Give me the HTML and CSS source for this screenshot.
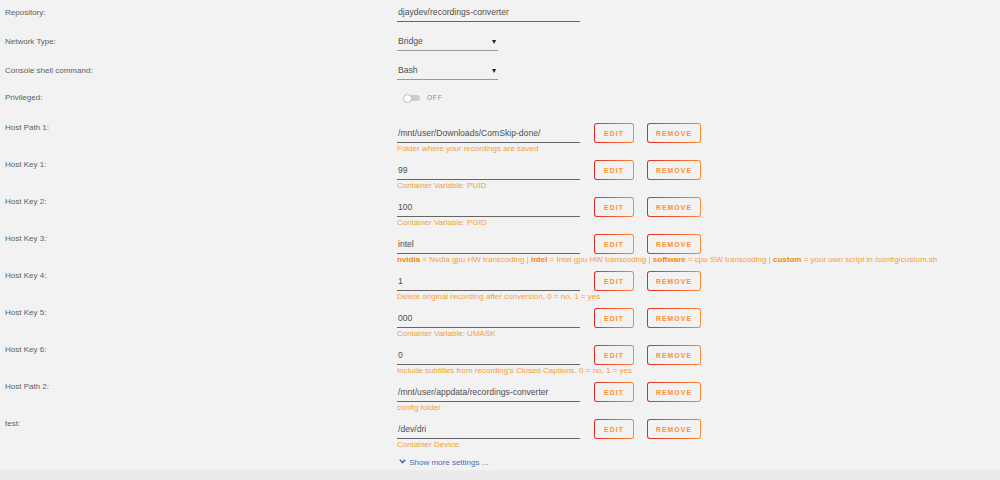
FILE: index.html
```html
<!DOCTYPE html>
<html lang="en">
<head>
    <meta charset="UTF-8">
    <title>Update Container</title>
    <link rel="stylesheet" href="styles.css">
</head>
<body>
    <div class="form">
        <div class="row simple">
            <div class="label">Repository:</div>
            <div class="field"><div class="input">djaydev/recordings-converter</div></div>
        </div>
        <div class="row simple">
            <div class="label">Network Type:</div>
            <div class="field"><div class="select">Bridge<span class="caret">&#9662;</span></div></div>
        </div>
        <div class="row simple">
            <div class="label">Console shell command:</div>
            <div class="field"><div class="select">Bash<span class="caret">&#9662;</span></div></div>
        </div>
        <div class="row toggle-row">
            <div class="label">Privileged:</div>
            <div class="field">
                <span class="switch"><span class="knob"></span></span>
                <span class="switch-text">OFF</span>
            </div>
        </div>

        <div class="row host">
            <div class="label">Host Path 1:</div>
            <div class="field">
                <div class="line">
                    <div class="input">/mnt/user/Downloads/ComSkip-done/</div>
                    <button class="btn edit">EDIT</button>
                    <button class="btn remove">REMOVE</button>
                </div>
                <div class="help">Folder where your recordings are saved</div>
            </div>
        </div>
        <div class="row host">
            <div class="label">Host Key 1:</div>
            <div class="field">
                <div class="line">
                    <div class="input">99</div>
                    <button class="btn edit">EDIT</button>
                    <button class="btn remove">REMOVE</button>
                </div>
                <div class="help">Container Variable: PUID</div>
            </div>
        </div>
        <div class="row host">
            <div class="label">Host Key 2:</div>
            <div class="field">
                <div class="line">
                    <div class="input">100</div>
                    <button class="btn edit">EDIT</button>
                    <button class="btn remove">REMOVE</button>
                </div>
                <div class="help">Container Variable: PGID</div>
            </div>
        </div>
        <div class="row host">
            <div class="label">Host Key 3:</div>
            <div class="field">
                <div class="line">
                    <div class="input">intel</div>
                    <button class="btn edit">EDIT</button>
                    <button class="btn remove">REMOVE</button>
                </div>
                <div class="help"><b>nvidia</b> = Nvdia gpu HW transcoding | <b>intel</b> = Intel gpu HW transcoding | <b>software</b> = cpu SW transcoding | <b>custom</b> = your own script in /config/custom.sh</div>
            </div>
        </div>
        <div class="row host">
            <div class="label">Host Key 4:</div>
            <div class="field">
                <div class="line">
                    <div class="input">1</div>
                    <button class="btn edit">EDIT</button>
                    <button class="btn remove">REMOVE</button>
                </div>
                <div class="help">Delete original recording after conversion, 0 = no, 1 = yes</div>
            </div>
        </div>
        <div class="row host">
            <div class="label">Host Key 5:</div>
            <div class="field">
                <div class="line">
                    <div class="input">000</div>
                    <button class="btn edit">EDIT</button>
                    <button class="btn remove">REMOVE</button>
                </div>
                <div class="help">Container Variable: UMASK</div>
            </div>
        </div>
        <div class="row host">
            <div class="label">Host Key 6:</div>
            <div class="field">
                <div class="line">
                    <div class="input">0</div>
                    <button class="btn edit">EDIT</button>
                    <button class="btn remove">REMOVE</button>
                </div>
                <div class="help">Include subtitles from recording's Closed Captions. 0 = no, 1 = yes</div>
            </div>
        </div>
        <div class="row host">
            <div class="label">Host Path 2:</div>
            <div class="field">
                <div class="line">
                    <div class="input">/mnt/user/appdata/recordings-converter</div>
                    <button class="btn edit">EDIT</button>
                    <button class="btn remove">REMOVE</button>
                </div>
                <div class="help">config folder</div>
            </div>
        </div>
        <div class="row host">
            <div class="label">test:</div>
            <div class="field">
                <div class="line">
                    <div class="input">/dev/dri</div>
                    <button class="btn edit">EDIT</button>
                    <button class="btn remove">REMOVE</button>
                </div>
                <div class="help">Container Device:</div>
            </div>
        </div>

        <div class="row more">
            <div class="label"></div>
            <div class="field">
                <a class="more-link" href="#">
                    <svg width="7" height="5" viewBox="0 0 7 5"><path d="M0.8 0.8 L3.5 3.6 L6.2 0.8" fill="none" stroke="#486dba" stroke-width="1.6"/></svg>
                    Show more settings ...
                </a>
            </div>
        </div>
    </div>
    <div class="footer"></div>
</body>
</html>
```

FILE: styles.css
```css
body {
    margin: 0;
    background-color: #f2f2f2;
    font-family: "Liberation Sans", Arial, sans-serif;
    color: #555;
    height: 480px;
    display: flex;
    flex-direction: column;
}
.form {
    padding: 3px 0 0 5px;
    flex: 1;
}
.row {
    display: grid;
    grid-template-columns: 392px 1fr;
}
.label {
    font-size: 8px;
    color: #606060;
}
.simple {
    height: 29px;
}
.simple .label {
    line-height: 20px;
}
.input {
    width: 183px;
    height: 19px;
    box-sizing: border-box;
    border-bottom: 1px solid #666;
    font-size: 8.6px;
    line-height: 19px;
    color: #505050;
    padding-left: 1px;
    white-space: nowrap;
}
.select {
    width: 101px;
    height: 19px;
    box-sizing: border-box;
    border-bottom: 1px solid #999;
    font-size: 8.6px;
    line-height: 19px;
    color: #505050;
    padding-left: 1px;
    display: flex;
    justify-content: space-between;
}
.caret {
    font-size: 8px;
    color: #222;
    margin-right: 2px;
}
.toggle-row {
    height: 32px;
    margin-top: 1px;
}
.toggle-row .label,
.toggle-row .field {
    line-height: 14px;
    height: 14px;
}
.toggle-row .field {
    display: flex;
    align-items: center;
    padding-left: 7px;
}
.switch {
    width: 16px;
    height: 6px;
    background-color: #ccc;
    border-radius: 3px;
    position: relative;
}
.knob {
    position: absolute;
    left: -1px;
    top: -1px;
    width: 7px;
    height: 7px;
    border-radius: 50%;
    background-color: #fff;
    border: 0.5px solid #bbb;
}
.switch-text {
    margin-left: 7px;
    font-size: 6.5px;
    letter-spacing: 0.8px;
    color: #888;
}
.host {
    height: 37px;
}
.host .label {
    line-height: 10px;
}
.line {
    display: flex;
    align-items: flex-start;
}
.line .input {
    height: 20px;
    line-height: 20px;
}
.btn {
    height: 20px;
    box-sizing: border-box;
    padding: 0;
    border: 1.5px solid transparent;
    border-radius: 3px;
    background: linear-gradient(#f2f2f2, #f2f2f2) padding-box, linear-gradient(90deg, #e22828, #ff8c2f) border-box;
    color: #ff8c2f;
    font-family: "Liberation Sans", Arial, sans-serif;
    font-weight: bold;
    font-size: 6.8px;
    letter-spacing: 1.1px;
    cursor: pointer;
}
.edit {
    width: 40px;
    margin-left: 14px;
}
.remove {
    width: 54px;
    margin-left: 13px;
}
.help {
    margin-top: 0;
    font-size: 8px;
    line-height: 12px;
    color: #f2a03a;
    white-space: nowrap;
}
.help b {
    color: #ee8a10;
}
.more {
    margin-top: -3px;
}
.more .field {
    line-height: 14px;
}
.more-link {
    font-size: 8px;
    color: #486dba;
    text-decoration: none;
    padding-left: 2px;
}
.more-link svg {
    margin-right: 1px;
    vertical-align: 1px;
}
.footer {
    height: 11px;
    background-color: #ebebeb;
}
```
